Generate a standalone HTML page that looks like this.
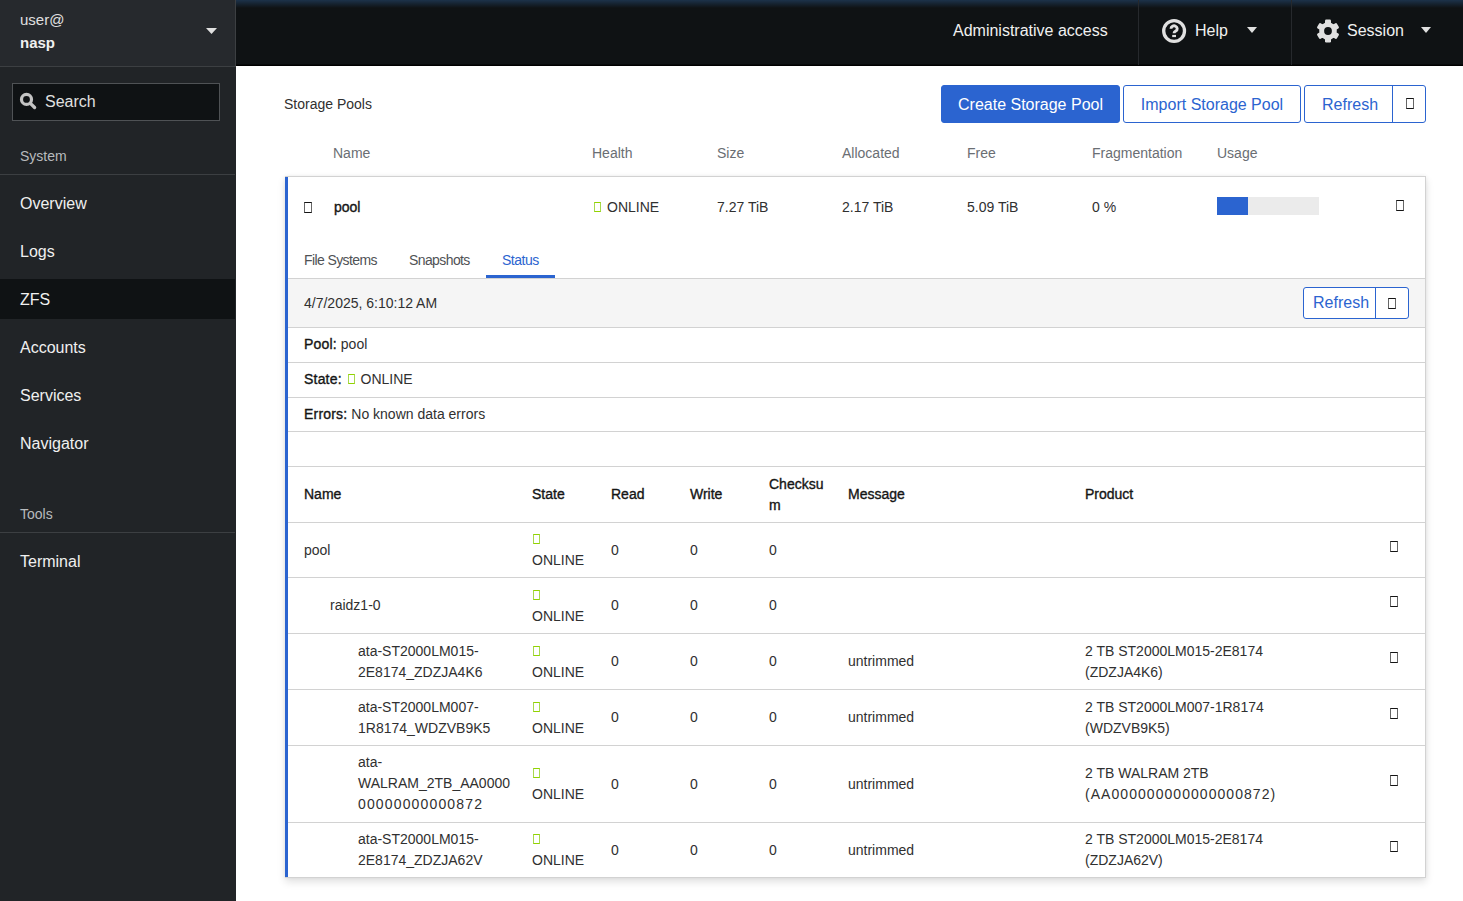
<!DOCTYPE html>
<html><head><meta charset="utf-8">
<style>
*{box-sizing:border-box;margin:0;padding:0}
html,body{width:1463px;height:901px;overflow:hidden;background:#fff;font-family:"Liberation Sans",sans-serif;color:#303030}
.a{position:absolute;white-space:nowrap}
#side{position:absolute;left:0;top:0;width:236px;height:901px;background:#212427}
#shead{position:absolute;left:0;top:0;width:236px;height:67px;background:#26292d;border-right:1px solid #3c3f42;border-bottom:1px solid #3c3f42}
#top{position:absolute;left:236px;top:0;width:1227px;height:66px;background:linear-gradient(#1c324a 0px,#0f1214 8px,#0f1214 64px,#000 65px);}
.vsep{position:absolute;top:0;width:1px;height:65px;background:#26292d}
.nav{position:absolute;left:0;width:235px;height:40px;color:#f0f0f0;font-size:16px;line-height:40px;padding:1px 0 0 20px}
.hsep{position:absolute;left:0;width:235px;height:1px;background:#3c3f42}
.sec{position:absolute;left:20px;color:#b8bbbe;font-size:14px;line-height:21px}
.tofu{display:inline-block;width:8px;height:11px;border:1px solid #151515;border-left-color:#666;border-right-color:#666;vertical-align:baseline}
.g{border-color:#92d400;border-left-color:#a8d94e;border-right-color:#a8d94e;width:7px;height:10px}
.btn{position:absolute;height:38px;border:1px solid #2b64d0;border-radius:3px;color:#2b64d0;font-size:16px;line-height:37px;text-align:center;background:#fff}
.th{position:absolute;color:#6a6e73;font-size:14px;line-height:21px}
.t14{font-size:14px;line-height:21px}
.line{position:absolute;left:288px;width:1137px;height:1px;background:#d2d2d2}
.row{position:absolute;left:0;width:1137px;border-top:1px solid #d2d2d2}
.row .c{position:absolute;top:0;bottom:0;display:flex;align-items:center;font-size:14px;line-height:21px;white-space:nowrap}
.hd .c,b,.sb{font-weight:normal;color:#151515;-webkit-text-stroke:0.35px currentColor}
b{letter-spacing:0.2px}
</style></head><body>
<div id="side">
  <div id="shead">
    <div class="a" style="left:20px;top:9px;color:#e0e0e0;font-size:15px;line-height:21px">user@</div>
    <div class="a" style="left:20px;top:32px;color:#f0f0f0;font-size:15px;line-height:21px;font-weight:bold">nasp</div>
    <svg class="a" style="left:206px;top:28px" width="12" height="7" viewBox="0 0 12 7"><path d="M0 0h11L5.5 6z" fill="#e0e0e0"/></svg>
  </div>
  <div class="a" style="left:12px;top:83px;width:208px;height:38px;background:#0f1214;border:1px solid #4f5255"></div>
  <svg class="a" style="left:19px;top:92px" width="18" height="18" viewBox="0 0 18 18"><circle cx="7.5" cy="7.4" r="5" fill="none" stroke="#c4c4c4" stroke-width="3.2"/><path d="M11.4 11.3L15.6 15.5" stroke="#c4c4c4" stroke-width="3.3" stroke-linecap="round"/></svg>
  <div class="a" style="left:45px;top:90px;color:#e0e0e0;font-size:16px;line-height:24px">Search</div>
  <div class="sec" style="top:146px">System</div>
  <div class="hsep" style="top:174px"></div>
  <div class="nav" style="top:183px">Overview</div>
  <div class="nav" style="top:231px">Logs</div>
  <div class="nav" style="top:279px;background:#0f1214">ZFS</div>
  <div class="nav" style="top:327px">Accounts</div>
  <div class="nav" style="top:375px">Services</div>
  <div class="nav" style="top:423px">Navigator</div>
  <div class="sec" style="top:504px">Tools</div>
  <div class="hsep" style="top:532px"></div>
  <div class="nav" style="top:541px">Terminal</div>
</div>

<div id="top">
  <div class="a" style="left:717px;top:19px;color:#f0f0f0;font-size:16px;line-height:24px">Administrative access</div>
  <div class="vsep" style="left:902px"></div>
  <svg class="a" style="left:925px;top:18px" width="26" height="26" viewBox="0 0 26 26"><circle cx="13.1" cy="13" r="10.4" fill="none" stroke="#e0e0e0" stroke-width="3.3"/><path d="M10 10.7a3.1 2.8 0 1 1 4.8 2.3c-1 .6-1.7 1-1.7 2v.2" fill="none" stroke="#e0e0e0" stroke-width="2.9"/><rect x="11.2" y="16.9" width="3.8" height="2.2" fill="#e0e0e0"/></svg>
  <div class="a" style="left:959px;top:19px;color:#f0f0f0;font-size:16px;line-height:24px">Help</div>
  <svg class="a" style="left:1011px;top:27px" width="11" height="7" viewBox="0 0 11 7"><path d="M0 0h10L5 6z" fill="#e0e0e0"/></svg>
  <div class="vsep" style="left:1055px"></div>
  <svg class="a" style="left:1080px;top:19px" width="24" height="24" viewBox="0 0 24 24"><g fill="#e0e0e0"><circle cx="12" cy="12" r="8.8"/><rect x="9" y="0.6" width="6" height="22.8" rx="1.2"/><rect x="9" y="0.6" width="6" height="22.8" rx="1.2" transform="rotate(60 12 12)"/><rect x="9" y="0.6" width="6" height="22.8" rx="1.2" transform="rotate(120 12 12)"/></g><circle cx="12" cy="12" r="3.9" fill="#0f1214"/></svg>
  <div class="a" style="left:1111px;top:19px;color:#f0f0f0;font-size:16px;line-height:24px">Session</div>
  <svg class="a" style="left:1185px;top:27px" width="11" height="7" viewBox="0 0 11 7"><path d="M0 0h10L5 6z" fill="#e0e0e0"/></svg>
</div>

<!-- main -->
<div class="a" style="left:284px;top:94px;font-size:14px;line-height:21px">Storage Pools</div>
<div class="btn" style="left:941px;top:85px;width:179px;background:#2b64d0;color:#fff">Create Storage Pool</div>
<div class="btn" style="left:1123px;top:85px;width:178px">Import Storage Pool</div>
<div class="btn" style="left:1304px;top:85px;width:122px;text-align:left;padding-left:17px">Refresh<span style="position:absolute;left:87px;top:-1px;width:1px;height:38px;background:#2b64d0"></span><span class="tofu" style="position:absolute;left:101px;top:12px;width:8px;height:11px"></span></div>

<div class="th" style="left:333px;top:143px">Name</div>
<div class="th" style="left:592px;top:143px">Health</div>
<div class="th" style="left:717px;top:143px">Size</div>
<div class="th" style="left:842px;top:143px">Allocated</div>
<div class="th" style="left:967px;top:143px">Free</div>
<div class="th" style="left:1092px;top:143px">Fragmentation</div>
<div class="th" style="left:1217px;top:143px">Usage</div>

<div id="card" style="position:absolute;left:285px;top:176px;width:1141px;height:702px;background:#fff;border:1px solid #d2d2d2;border-left:0;box-shadow:0 4px 8px rgba(3,3,3,.12),0 0 4px rgba(3,3,3,.06)"><div style="position:absolute;left:0;top:0;width:3px;height:700px;background:#2b64d0"></div>
</div>
<div id="cc" style="position:absolute;left:288px;top:177px;width:1137px;height:700px">
  <span class="tofu a" style="left:16px;top:25px"></span>
  <div class="a t14 sb" style="left:46px;top:20px">pool</div>
  <span class="tofu g a" style="left:306px;top:25px"></span>
  <div class="a t14" style="left:319px;top:20px">ONLINE</div>
  <div class="a t14" style="left:429px;top:20px">7.27 TiB</div>
  <div class="a t14" style="left:554px;top:20px">2.17 TiB</div>
  <div class="a t14" style="left:679px;top:20px">5.09 TiB</div>
  <div class="a t14" style="left:804px;top:20px">0 %</div>
  <div class="a" style="left:929px;top:20px;width:102px;height:18px;background:#ebebeb"><div style="width:31px;height:18px;background:#2b64d0"></div></div>
  <span class="tofu a" style="left:1108px;top:23px"></span>

  <div class="a t14" style="left:16px;top:73px;color:#4f5255;letter-spacing:-0.6px">File Systems</div>
  <div class="a t14" style="left:121px;top:73px;color:#4f5255;letter-spacing:-0.6px">Snapshots</div>
  <div class="a t14" style="left:214px;top:73px;color:#2b64d0;letter-spacing:-0.5px">Status</div>
  <div class="a" style="left:198px;top:98px;width:69px;height:3px;background:#2b64d0"></div>
  <div class="a" style="left:0;top:101px;width:1137px;height:50px;background:#f5f5f5;border-top:1px solid #d2d2d2;border-bottom:1px solid #d2d2d2"></div>
  <div class="a t14" style="left:16px;top:116px">4/7/2025, 6:10:12 AM</div>
  <div class="btn" style="left:1015px;top:110px;width:106px;height:32px;line-height:30px;text-align:left;padding-left:9px">Refresh<span style="position:absolute;left:71px;top:-1px;width:1px;height:32px;background:#2b64d0"></span><span class="tofu" style="position:absolute;left:84px;top:10px;width:8px;height:11px"></span></div>

  <div class="a t14" style="left:16px;top:157px"><b>Pool:</b> pool</div>
  <div class="line a" style="left:0;top:185px"></div>
  <div class="a t14" style="left:16px;top:192px"><b>State:</b> <span class="tofu g" style="margin:0 2px 0 2px"></span> ONLINE</div>
  <div class="line a" style="left:0;top:220px"></div>
  <div class="a t14" style="left:16px;top:227px"><b>Errors:</b> No known data errors</div>
  <div class="line a" style="left:0;top:254px"></div>
  <div class="line a" style="left:0;top:289px"></div>
<div id="st">
<div class="row hd" style="top:289px;height:56px">
<div class="c" style="left:16px"><div>Name</div></div><div class="c" style="left:244px"><div>State</div></div><div class="c" style="left:323px"><div>Read</div></div><div class="c" style="left:402px"><div>Write</div></div><div class="c" style="left:481px"><div>Checksu<br>m</div></div><div class="c" style="left:560px"><div>Message</div></div><div class="c" style="left:797px"><div>Product</div></div></div>
<div class="row" style="top:345px;height:55px">
<div class="c" style="left:16px"><div>pool</div></div>
<div class="c" style="left:244px"><div><span class="tofu g" style="margin-left:1px"></span><br>ONLINE</div></div>
<div class="c" style="left:323px"><div>0</div></div><div class="c" style="left:402px"><div>0</div></div><div class="c" style="left:481px"><div>0</div></div>
<div class="c" style="left:1102px;bottom:6px"><div><span class="tofu"></span></div></div>
</div>
<div class="row" style="top:400px;height:56px">
<div class="c" style="left:42px"><div>raidz1-0</div></div>
<div class="c" style="left:244px"><div><span class="tofu g" style="margin-left:1px"></span><br>ONLINE</div></div>
<div class="c" style="left:323px"><div>0</div></div><div class="c" style="left:402px"><div>0</div></div><div class="c" style="left:481px"><div>0</div></div>
<div class="c" style="left:1102px;bottom:6px"><div><span class="tofu"></span></div></div>
</div>
<div class="row" style="top:456px;height:56px">
<div class="c" style="left:70px"><div>ata-ST2000LM015-<br>2E8174_ZDZJA4K6</div></div>
<div class="c" style="left:244px"><div><span class="tofu g" style="margin-left:1px"></span><br>ONLINE</div></div>
<div class="c" style="left:323px"><div>0</div></div><div class="c" style="left:402px"><div>0</div></div><div class="c" style="left:481px"><div>0</div></div>
<div class="c" style="left:560px"><div>untrimmed</div></div>
<div class="c" style="left:797px"><div>2 TB ST2000LM015-2E8174<br>(ZDZJA4K6)</div></div>
<div class="c" style="left:1102px;bottom:6px"><div><span class="tofu"></span></div></div>
</div>
<div class="row" style="top:512px;height:56px">
<div class="c" style="left:70px"><div>ata-ST2000LM007-<br>1R8174_WDZVB9K5</div></div>
<div class="c" style="left:244px"><div><span class="tofu g" style="margin-left:1px"></span><br>ONLINE</div></div>
<div class="c" style="left:323px"><div>0</div></div><div class="c" style="left:402px"><div>0</div></div><div class="c" style="left:481px"><div>0</div></div>
<div class="c" style="left:560px"><div>untrimmed</div></div>
<div class="c" style="left:797px"><div>2 TB ST2000LM007-1R8174<br>(WDZVB9K5)</div></div>
<div class="c" style="left:1102px;bottom:6px"><div><span class="tofu"></span></div></div>
</div>
<div class="row" style="top:568px;height:77px">
<div class="c" style="left:70px;bottom:2px"><div>ata-<br>WALRAM_2TB_AA0000<br><span style="letter-spacing:1.15px">00000000000872</span></div></div>
<div class="c" style="left:244px"><div><span class="tofu g" style="margin-left:1px"></span><br>ONLINE</div></div>
<div class="c" style="left:323px"><div>0</div></div><div class="c" style="left:402px"><div>0</div></div><div class="c" style="left:481px"><div>0</div></div>
<div class="c" style="left:560px"><div>untrimmed</div></div>
<div class="c" style="left:797px"><div>2 TB WALRAM 2TB<br><span style="letter-spacing:1.05px">(AA000000000000000872)</span></div></div>
<div class="c" style="left:1102px;bottom:6px"><div><span class="tofu"></span></div></div>
</div>
<div class="row" style="top:645px;height:55px">
<div class="c" style="left:70px"><div>ata-ST2000LM015-<br>2E8174_ZDZJA62V</div></div>
<div class="c" style="left:244px"><div><span class="tofu g" style="margin-left:1px"></span><br>ONLINE</div></div>
<div class="c" style="left:323px"><div>0</div></div><div class="c" style="left:402px"><div>0</div></div><div class="c" style="left:481px"><div>0</div></div>
<div class="c" style="left:560px"><div>untrimmed</div></div>
<div class="c" style="left:797px"><div>2 TB ST2000LM015-2E8174<br>(ZDZJA62V)</div></div>
<div class="c" style="left:1102px;bottom:6px"><div><span class="tofu"></span></div></div>
</div>
</div>
</div>
</body></html>
